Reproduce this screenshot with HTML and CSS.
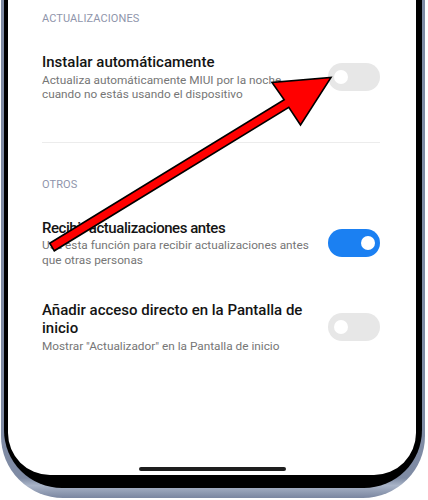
FILE: index.html
```html
<!DOCTYPE html>
<html lang="es">
<head>
<meta charset="utf-8">
<title>Actualizaciones</title>
<link rel="stylesheet" href="styles.css">
</head>
<body>
<div class="phone">
  <div class="bezel">
    <div class="screen">
      <section class="section first">
        <div class="header">ACTUALIZACIONES</div>
        <div class="row">
          <div class="text">
            <div class="title">Instalar automáticamente</div>
            <div class="sub"><span class="line">Actualiza automáticamente MIUI por la noche</span> <span class="line">cuando no estás usando el dispositivo</span></div>
          </div>
          <div class="toggle off"><span class="knob"></span></div>
        </div>
      </section>
      <section class="section second">
        <div class="header">OTROS</div>
        <div class="row tight">
          <div class="text">
            <div class="title">Recibir actualizaciones antes</div>
            <div class="sub"><span class="line">Usa esta función para recibir actualizaciones antes</span> <span class="line">que otras personas</span></div>
          </div>
          <div class="toggle on"><span class="knob"></span></div>
        </div>
        <div class="row">
          <div class="text">
            <div class="title"><span class="line">Añadir acceso directo en la Pantalla de</span> <span class="line">inicio</span></div>
            <div class="sub">Mostrar "Actualizador" en la Pantalla de inicio</div>
          </div>
          <div class="toggle off"><span class="knob"></span></div>
        </div>
      </section>
      <div class="home-bar"></div>
    </div>
  </div>
</div>
<svg class="arrow" width="428" height="500" viewBox="0 0 428 500" xmlns="http://www.w3.org/2000/svg">
  <polygon points="49.7,243.2 284.2,99.7 272,82.5 331,77.5 300.5,125 288.8,107.3 54.3,250.8" fill="#ff0000" stroke="#000" stroke-width="1.6" stroke-linejoin="miter"/>
</svg>
</body>
</html>
```
FILE: styles.css
```css
* { box-sizing: border-box; }
html, body {
  margin: 0;
  padding: 0;
  background: #ffffff;
  width: 428px;
  height: 500px;
  overflow: hidden;
  font-family: Roboto, "Noto Sans", "Liberation Sans", sans-serif;
}
.phone {
  margin-left: 1px;
  width: 424px;
  height: 498px;
  padding: 0 3px 10px 3px;
  background: linear-gradient(to bottom, #7f8ba4 0%, #7f8ba4 96%, #a9b4c8 97.5%, #7a86a0 100%);
  border-radius: 0 0 62px 62px;
}
.bezel {
  height: 100%;
  padding: 0 6px 13px 4px;
  background: #000000;
  border-radius: 0 0 58px 58px;
}
.screen {
  height: 100%;
  background: #ffffff;
  border-radius: 0 0 42px 42px;
  display: flex;
  flex-direction: column;
  padding: 12px 36px 4px 34px;
}
.section.first {
  padding-bottom: 40px;
  border-bottom: 1px solid #ececec;
}
.section.second {
  padding-top: 35px;
  display: flex;
  flex-direction: column;
  gap: 34px;
}
.header {
  font-size: 11px;
  line-height: 14px;
  color: #8f95ab;
  letter-spacing: 0.1px;
}
.first .header { margin-bottom: 27px; }
.second .header { margin-bottom: -7px; }
.row {
  display: flex;
  align-items: center;
  justify-content: space-between;
  gap: 8px;
}
.text {
  flex: 1;
  min-width: 0;
}
.line {
  display: block;
  white-space: nowrap;
}
.title {
  font-size: 15px;
  line-height: 18px;
  font-weight: 500;
  color: #141414;
}
.sub {
  margin-top: 1.5px;
  font-size: 11.8px;
  line-height: 14.5px;
  color: #767676;
}
.row.tight .title { letter-spacing: -0.45px; }
.toggle {
  position: relative;
  flex: 0 0 52px;
  width: 52px;
  height: 28px;
  border-radius: 14px;
}
.toggle.off { background: #e7e7e7; }
.toggle.on { background: #1b80f2; }
.knob {
  position: absolute;
  top: 7px;
  width: 14px;
  height: 14px;
  border-radius: 50%;
  background: #ffffff;
}
.toggle.off .knob { left: 6px; }
.toggle.on .knob { right: 5px; }
.home-bar {
  margin-top: auto;
  align-self: center;
  width: 147px;
  height: 4px;
  border-radius: 2px;
  background: #1e1e1e;
  margin-left: 2px;
}
.arrow {
  position: absolute;
  left: 0;
  top: 0;
  pointer-events: none;
}
```
